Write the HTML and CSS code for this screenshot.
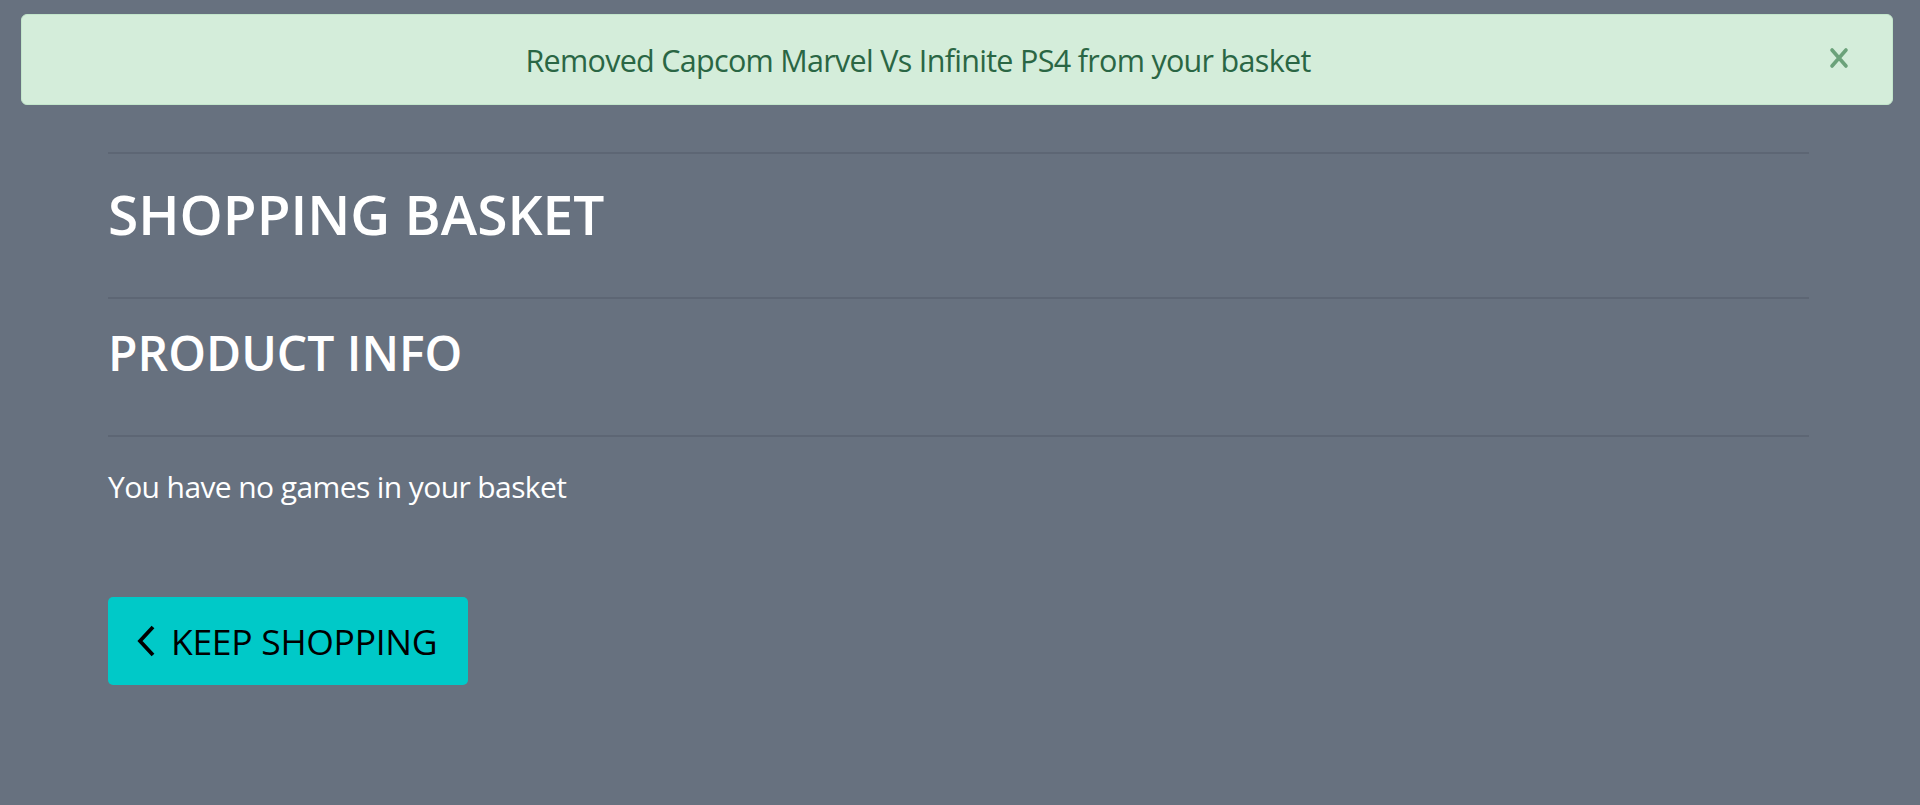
FILE: index.html
```html
<!DOCTYPE html>
<html lang="en">
<head>
<meta charset="utf-8">
<title>Shopping Basket</title>
<link rel="stylesheet" href="styles.css">
</head>
<body>
<div class="alert">
  <span class="alert-text">Removed Capcom Marvel Vs Infinite PS4 from your basket</span>
  <button class="alert-close" aria-label="Close">
    <svg width="20" height="22" viewBox="0 0 20 22"><path d="M3 3 L17 19 M17 3 L3 19" stroke="currentColor" stroke-width="3.6" stroke-linecap="round" fill="none"/></svg>
  </button>
</div>
<main class="container">
  <hr class="rule">
  <h1 class="title">SHOPPING BASKET</h1>
  <hr class="rule">
  <h2 class="subtitle">PRODUCT INFO</h2>
  <hr class="rule">
  <p class="empty">You have no games in your basket</p>
  <a class="btn" href="#">
    <svg class="chev" width="20" height="32" viewBox="0 0 20 32"><path d="M17 2 L4 16 L17 30" stroke="currentColor" stroke-width="3.8" fill="none" stroke-linejoin="miter"/></svg>
    <span>KEEP SHOPPING</span>
  </a>
</main>
</body>
</html>
```

FILE: styles.css
```css
html, body {
  margin: 0;
  padding: 0;
}
body {
  background: #67717f;
  font-family: "Open Sans", "Noto Sans", sans-serif;
  color: #ffffff;
  height: 805px;
  overflow: hidden;
}
.alert {
  margin: 14px 27px 0 21px;
  height: 91px;
  box-sizing: border-box;
  padding-right: 78px;
  background: #d4edda;
  border: 1px solid #c3e6cb;
  border-radius: 6px;
  display: flex;
  align-items: center;
  justify-content: center;
  position: relative;
  color: #2a6644;
}
.alert-text {
  font-size: 30.5px;
  letter-spacing: -0.7px;
}
.alert-close {
  position: absolute;
  right: 43px;
  top: 32px;
  background: none;
  border: 0;
  padding: 0;
  color: #6ba27a;
  display: flex;
}
.container {
  margin: 47px 111px 0 108px;
}
.rule {
  margin: 0;
  border: 0;
  border-top: 2px solid #5d6674;
}
.title {
  margin: 27px 0 50px;
  font-size: 55px;
  line-height: 66px;
  font-weight: 600;
}
.subtitle {
  margin: 25px 0 53px;
  font-size: 48px;
  line-height: 58px;
  font-weight: 600;
}
.empty {
  margin: 30px 0 0;
  font-size: 30px;
  line-height: 40px;
  letter-spacing: -0.6px;
}
.btn {
  margin-top: 90px;
  width: 360px;
  height: 88px;
  box-sizing: border-box;
  background: #00c9c8;
  border-radius: 5px;
  color: #000;
  text-decoration: none;
  display: flex;
  align-items: center;
  padding-left: 28px;
  gap: 15px;
  font-size: 35.5px;
  font-weight: 500;
  letter-spacing: -0.3px;
}
.chev {
  flex: none;
}
```
